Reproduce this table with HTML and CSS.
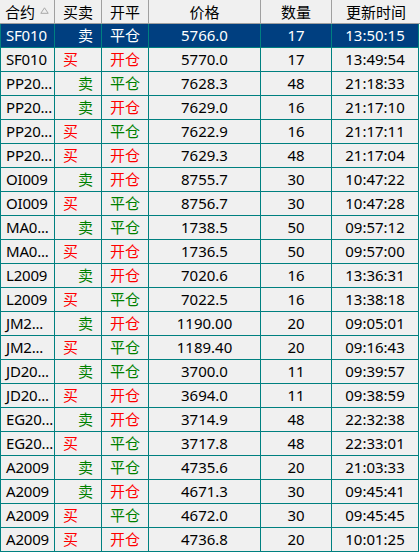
FILE: index.html
```html
<!DOCTYPE html>
<html lang="zh">
<head>
<meta charset="utf-8">
<link rel="stylesheet" href="styles.css">
</head>
<body>
<div class="grid">
  <div class="head">
    <div class="hc left">合约<svg class="sort" width="9" height="7" viewBox="0 0 9 7"><path d="M4.5 0.8 L8.2 6.3 L0.8 6.3 Z" fill="none" stroke="#a8a8a8" stroke-width="1"/></svg></div>
    <div class="hc">买卖</div>
    <div class="hc">开平</div>
    <div class="hc">价格</div>
    <div class="hc">数量</div>
    <div class="hc">更新时间</div>
  </div>
  <div id="body"></div>
</div>
<script src="app.js"></script>
</body>
</html>
```

FILE: app.js
```js
var rows = [
  ["SF010","卖","平仓","5766.0","17","13:50:15"],
  ["SF010","买","开仓","5770.0","17","13:49:54"],
  ["PP20...","卖","平仓","7628.3","48","21:18:33"],
  ["PP20...","卖","开仓","7629.0","16","21:17:10"],
  ["PP20...","买","平仓","7622.9","16","21:17:11"],
  ["PP20...","买","开仓","7629.3","48","21:17:04"],
  ["OI009","卖","开仓","8755.7","30","10:47:22"],
  ["OI009","买","平仓","8756.7","30","10:47:28"],
  ["MA0...","卖","平仓","1738.5","50","09:57:12"],
  ["MA0...","买","开仓","1736.5","50","09:57:00"],
  ["L2009","卖","开仓","7020.6","16","13:36:31"],
  ["L2009","买","平仓","7022.5","16","13:38:18"],
  ["JM2...","卖","开仓","1190.00","20","09:05:01"],
  ["JM2...","买","平仓","1189.40","20","09:16:43"],
  ["JD20...","卖","平仓","3700.0","11","09:39:57"],
  ["JD20...","买","开仓","3694.0","11","09:38:59"],
  ["EG20...","卖","开仓","3714.9","48","22:32:38"],
  ["EG20...","买","平仓","3717.8","48","22:33:01"],
  ["A2009","卖","平仓","4735.6","20","21:03:33"],
  ["A2009","卖","开仓","4671.3","30","09:45:41"],
  ["A2009","买","平仓","4672.0","30","09:45:45"],
  ["A2009","买","开仓","4736.8","20","10:01:25"]
];
var body = document.getElementById("body");
rows.forEach(function (r, i) {
  var row = document.createElement("div");
  row.className = "row" + (i === 0 ? " selected" : "");
  var side = r[1] === "买" ? "buy" : "sell";
  var oc = r[2] === "开仓" ? "open" : "close";
  row.innerHTML =
    '<div class="c sym">' + r[0] + '</div>' +
    '<div class="c side ' + side + '">' + r[1] + '</div>' +
    '<div class="c oc ' + oc + '">' + r[2] + '</div>' +
    '<div class="c">' + r[3] + '</div>' +
    '<div class="c">' + r[4] + '</div>' +
    '<div class="c">' + r[5] + '</div>';
  body.appendChild(row);
});
```

FILE: styles.css
```css
html, body {
  margin: 0;
  padding: 0;
  background: #ffffff;
}
body {
  font-family: "Noto Sans", "Noto Sans CJK SC", sans-serif;
  font-size: 15px;
  color: #000;
}
.grid {
  width: 420px;
}
.head {
  display: grid;
  grid-template-columns: 55px 47px 47px 112px 71px 88px;
  height: 24px;
  background: #f0f0f0;
  border-bottom: 1px solid #a0a0a0;
  box-sizing: border-box;
}
.hc {
  display: flex;
  align-items: center;
  justify-content: center;
  border-right: 1px solid #a0a0a0;
  box-sizing: border-box;
  line-height: 22px;
  white-space: nowrap;
}
.hc:last-child {
  border-right: none;
}
.hc.left {
  justify-content: flex-start;
  padding-left: 5px;
  gap: 5px;
}
.sort {
  display: block;
  margin-top: -3px;
}
.row {
  display: grid;
  grid-template-columns: 54px 47px 47px 112px 71px 87px;
  width: 419px;
  height: 24px;
  border-left: 1px solid #008080;
  border-bottom: 1px solid #008080;
  box-sizing: border-box;
  background: #f0f0f0;
}
.row.selected {
  background: #003f80;
  color: #fff;
}
.c {
  border-right: 1px solid #008080;
  box-sizing: border-box;
  line-height: 23px;
  text-align: center;
  white-space: nowrap;
}
.sym {
  text-align: left;
  padding-left: 5px;
  letter-spacing: -0.2px;
}
.side.buy {
  text-align: left;
  padding-left: 8px;
  color: #ff0000;
}
.side.sell {
  text-align: right;
  padding-right: 8px;
  color: #008000;
}
.oc.open {
  color: #ff0000;
}
.oc.close {
  color: #008000;
}
.row.selected .c {
  color: #fff;
}
```
